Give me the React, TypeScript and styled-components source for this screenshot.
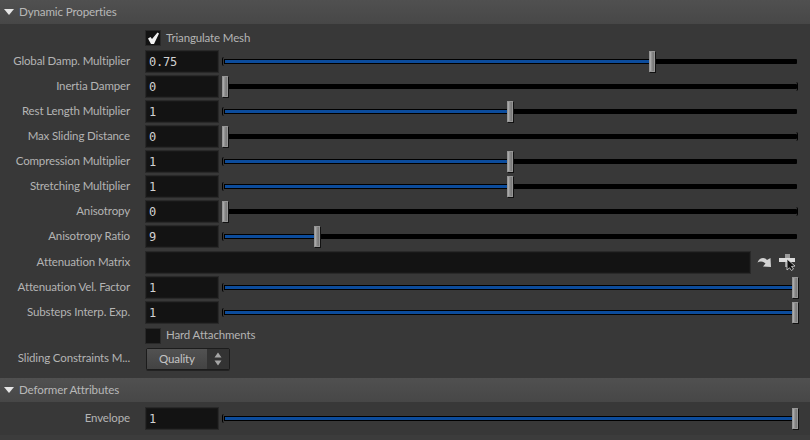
import React from "react";
import styled, { createGlobalStyle } from "styled-components";

const Global = createGlobalStyle`
  html, body { margin: 0; padding: 0; background: #3c3c3c; overflow: hidden; }
  #root { width: 810px; height: 440px; }
`;
const Page = styled.div`
  width: 810px; height: 440px; background: #3c3c3c; color: #b4b4b4;
  font-family: "Lato", "Noto Sans", sans-serif; font-size: 11.5px; letter-spacing: -0.14px;
  display: flex; flex-direction: column; overflow: hidden;
`;
const Header = styled.div`
  height: 24px; flex: none; display: flex; align-items: center; gap: 5px; padding-left: 4px;
  background: linear-gradient(#505050, #474747); color: #b8b8b8; font-size: 11.6px;
`;
const HeaderTitle = styled.span` padding-bottom: 2px; `;
const Caret = styled.span`
  width: 0; height: 0; border-left: 5.5px solid transparent; border-right: 5.5px solid transparent;
  border-top: 6px solid #e6e6e6;
`;
const Section = styled.div<{ $top: number; $bottom: number }>`
  display: flex; flex-direction: column; padding: ${p => p.$top}px 0 ${p => p.$bottom}px; flex: none;
  background: #383838;
`;
const Row = styled.div<{ $h: number }>`
  height: ${p => p.$h}px; display: flex; align-items: center; flex: none;
`;
const Label = styled.div`
  width: 130px; margin-right: 15px; padding-bottom: 2px; text-align: right; white-space: nowrap; flex: none; color: #b4b4b4;
`;
const CheckText = styled.span` padding-bottom: 2px; `;
const Field = styled.div`
  width: 74px; height: 23px; box-sizing: border-box; flex: none; background: #131313;
  border: 1px solid #292929; box-shadow: inset 0 0 0 1px #181818; color: #d2d2d2;
  font-family: "DejaVu Sans Mono", monospace; font-size: 12px; letter-spacing: -0.2px; line-height: 22px; padding-left: 3px;
`;
const WideField = styled(Field)` width: 606px; `;
const Track = styled.div<{ $empty: boolean }>`
  position: relative; width: 575px; height: 5px; margin-left: 3px; flex: none;
  background: #000; border-radius: 1px;
  &::after {
    content: "";
    position: absolute; top: -2px; width: 2px; height: 9px; box-sizing: border-box;
    ${p => p.$empty ? "right: -1px; border-right: 1px solid #000; border-radius: 0 2px 2px 0;"
                    : "left: 0; border-left: 1px solid #000; background: #383838; border-radius: 2px 0 0 2px;"}
  }
`;
const Fill = styled.div`
  height: 3px; margin: 1px 0 0 3px; background: #0c4c9c;
`;
const Handle = styled.div`
  position: absolute; top: -8px; width: 6px; height: 21px; box-sizing: border-box; z-index: 1;
  background: linear-gradient(90deg, #b4b4b4, #888 50%, #767676);
  border: 1px solid #969696; box-shadow: 1px 1px 0 #111;
`;
const Box = styled.div`
  width: 14px; height: 14px; background: #131313; border: 1px solid #292929; flex: none;
  display: flex; align-items: center; justify-content: center; margin-left: 145px; margin-right: 5px;
`;
const Icons = styled.div` display: flex; align-items: center; gap: 7px; margin-left: 6px; `;
const Menu = styled.div`
  width: 84px; height: 22px; margin-left: 1px; box-sizing: border-box; display: flex; border: 1px solid #1c1c1c; border-radius: 2px;
  box-shadow: 0 1px 0 #222; color: #c4c4c4;
`;
const MenuText = styled.div`
  flex: 1; text-align: center; line-height: 19px; background: linear-gradient(#525252, #434343);
`;
const MenuArrow = styled.div`
  width: 22px; background: #333; display: flex; align-items: center; justify-content: center;
`;

function Slider({ v }: { v: number }) {
  const left = v * 570;
  return (
    <Track $empty={v === 0}>
      {v > 0 && <Fill style={{ width: left - 2 }} />}
      <Handle style={{ left }} />
    </Track>
  );
}
function SliderRow({ label, value, v }: { label: string; value: string; v: number }) {
  return (
    <Row $h={25}>
      <Label>{label}</Label>
      <Field>{value}</Field>
      <Slider v={v} />
    </Row>
  );
}
const rows1 = [
  ["Global Damp. Multiplier", "0.75", 0.749],
  ["Inertia Damper", "0", 0],
  ["Rest Length Multiplier", "1", 0.5],
  ["Max Sliding Distance", "0", 0],
  ["Compression Multiplier", "1", 0.5],
  ["Stretching Multiplier", "1", 0.5],
  ["Anisotropy", "0", 0],
  ["Anisotropy Ratio", "9", 0.161],
] as const;

export default function App() {
  return (
    <Page>
      <Global />
      <Header><Caret /><HeaderTitle>Dynamic Properties</HeaderTitle></Header>
      <Section $top={3} $bottom={7}>
        <Row $h={22}>
          <Box>
            <svg width="13" height="13" viewBox="0 0 13 13">
              <path d="M1 6.5 L3.5 5 L5 7 L10.5 0.5 L12 1.5 L7 12 L4 12 Z" fill="#f2f2f2" />
            </svg>
          </Box>
          <CheckText>Triangulate Mesh</CheckText>
        </Row>
        {rows1.map(r => <SliderRow key={r[0]} label={r[0]} value={r[1]} v={r[2]} />)}
        <Row $h={26}>
          <Label>Attenuation Matrix</Label>
          <WideField />
          <Icons>
            <svg width="15" height="12" viewBox="0 0 15 12">
              <path d="M0.5 6.5 C2.5 1 8 1 10 4 L13.5 2 L14 11 L6 10.5 L8.5 7.5 C6 5 3 5 0.5 6.5 Z" fill="#d2d2d2" />
            </svg>
            <svg width="17" height="18" viewBox="0 0 17 18">
              <path d="M6 1 H11 V5 H6 Z M6 9 H10 V14 H6 Z" fill="#9a9a9a" />
              <path d="M0 5 H16 V9 H0 Z" fill="#dcdcdc" />
              <path d="M8 6 L8 17 L10.5 14.8 L12.5 17.5 L14.5 16 L12.5 13.5 L16 13 Z" fill="#111" stroke="#dedede" strokeWidth="0.8" />
            </svg>
          </Icons>
        </Row>
        <SliderRow label="Attenuation Vel. Factor" value="1" v={1} />
        <SliderRow label="Substeps Interp. Exp." value="1" v={1} />
        <Row $h={21}>
          <Box />
          <CheckText>Hard Attachments</CheckText>
        </Row>
        <Row $h={25}>
          <Label>Sliding Constraints M...</Label>
          <Menu>
            <MenuText>Quality</MenuText>
            <MenuArrow>
              <svg width="8" height="14" viewBox="0 0 8 14">
                <path d="M4 0.5 L7.5 5.5 H0.5 Z M4 13.5 L0.5 8.5 H7.5 Z" fill="#a6a6a6" />
              </svg>
            </MenuArrow>
          </Menu>
        </Row>
      </Section>
      <Header><Caret /><HeaderTitle>Deformer Attributes</HeaderTitle></Header>
      <Section $top={4} $bottom={4}>
        <SliderRow label="Envelope" value="1" v={1} />
      </Section>
    </Page>
  );
}
